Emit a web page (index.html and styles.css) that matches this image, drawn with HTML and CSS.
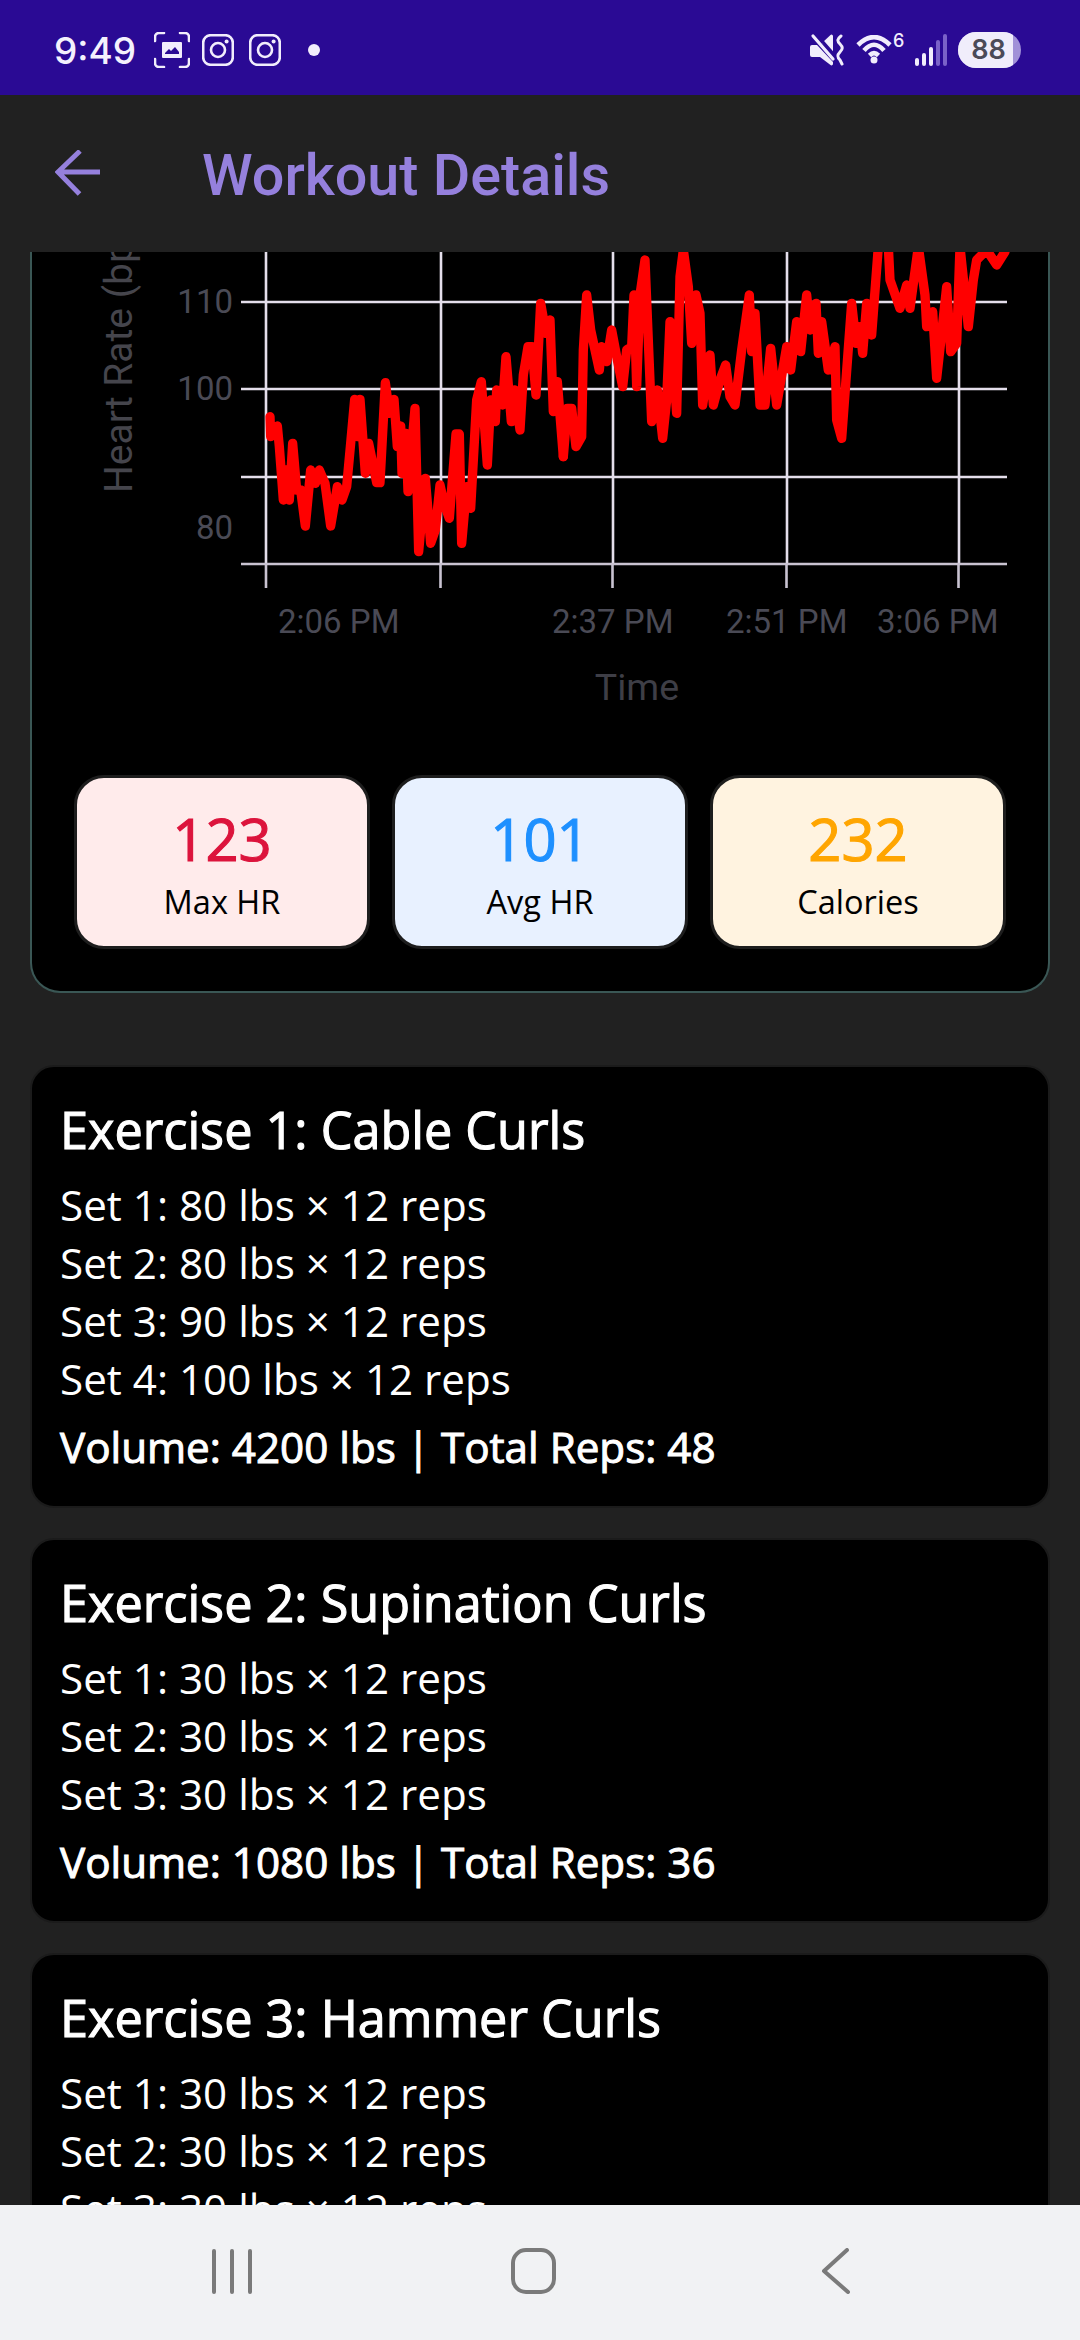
FILE: index.html
```html
<!DOCTYPE html>
<html lang="en">
<head>
<meta charset="utf-8">
<title>Workout Details</title>
<link rel="stylesheet" href="styles.css">
</head>
<body>
<div class="screen">
  <header class="status">
    <div class="status-left">
      <span class="clock">9:49</span>
      <svg class="ic ic-shot" width="36" height="36" viewBox="0 0 36 36"><path class="st" d="M1 9V5a4 4 0 0 1 4-4h5M26 1h5a4 4 0 0 1 4 4v4M35 27v4a4 4 0 0 1-4 4h-5M10 35H5a4 4 0 0 1-4-4v-4"/><path class="fl" d="M9 10h18a1 1 0 0 1 1 1v14a1 1 0 0 1-1 1H9a1 1 0 0 1-1-1V11a1 1 0 0 1 1-1z"/><path class="cut" d="M11 21l4-4 2 2 4-4 4 5v2H11z"/></svg>
      <svg class="ic ic-ig" width="32" height="32" viewBox="0 0 32 32"><rect class="st" x="1.2" y="1.2" width="29.6" height="29.6" rx="7.5"/><circle class="st" cx="16" cy="16" r="7"/><circle class="fl" cx="24.6" cy="7.4" r="2"/></svg>
      <svg class="ic ic-ig2" width="32" height="32" viewBox="0 0 32 32"><rect class="st" x="1.2" y="1.2" width="29.6" height="29.6" rx="7.5"/><circle class="st" cx="16" cy="16" r="7"/><circle class="fl" cx="24.6" cy="7.4" r="2"/></svg>
      <span class="dot"></span>
    </div>
    <div class="status-right">
      <svg class="ic" width="36" height="34" viewBox="0 0 36 34"><path class="fl" d="M4 12h5l16 17v2a1.500 1.500 0 0 1-2.500 1L12 24H4a2 2 0 0 1-2-2v-8a2 2 0 0 1 2-2zM14 10l8.500-8a1.500 1.500 0 0 1 2.500 1v16z"/><path class="st gap" d="M8 1l20 23"/><path class="st slash" d="M5 3l20 23"/><path class="st wave" d="M33 3c-4 3-4 5-1 8s3 5 0 8-3 5 0 8l2 4"/></svg>
      <div class="wifi-wrap">
        <svg class="ic" width="36" height="30" viewBox="0 0 36 30"><path class="st wf" d="M2 10Q18-6 34 10"/><path class="st wf" d="M8 15.500Q18 4 28 15.500"/><path class="st wf" d="M13.500 20.500Q18 16 22.500 20.500"/><circle class="fl" cx="18" cy="25" r="3.500"/></svg>
        <span class="wifi-six">6</span>
      </div>
      <div class="signal">
        <span class="bar b1"></span><span class="bar b2"></span><span class="bar b3"></span><span class="bar b4 dim"></span><span class="bar b5 dim"></span>
      </div>
      <div class="battery"><div class="batt-fill">88</div></div>
    </div>
  </header>

  <div class="appbar">
    <svg class="back" width="46" height="46" viewBox="0 0 46 46"><path d="M45 22H3M25 1L3 22l21.500 22"/></svg>
    <h1 class="title">Workout Details</h1>
  </div>

  <main class="content">
    <section class="chart-card">
      <svg class="chart" width="1016" height="523" viewBox="32 252 1016 523">
        <g class="grid">
          <path d="M241 302H1007M241 389H1007M241 477H1007"/>
          <path d="M266 252V564M441 252V564M613 252V564M787 252V564M959 252V564"/>
        </g>
        <g class="grid grid-low">
          <path d="M241 564H1007"/>
          <path d="M266 564V588M440.500 564V588M612.500 564V588M786.500 564V588M958.500 564V588"/>
        </g>
        <text class="tick end" x="233" y="313">110</text>
        <text class="tick end" x="233" y="400">100</text>
        <text class="tick end" x="233" y="539">80</text>
        <text class="tick" x="278" y="633">2:06 PM</text>
        <text class="tick" x="552" y="633">2:37 PM</text>
        <text class="tick" x="726" y="633">2:51 PM</text>
        <text class="tick" x="877" y="633">3:06 PM</text>
        <text class="axis-title" x="637" y="700">Time</text>
        <text class="axis-title rot" transform="translate(132 493) rotate(-90)">Heart Rate (bpm)</text>
        <g class="hr" transform="translate(80 240) scale(.33333)">
          <polyline points="570,530 572,590 592,558 598,620 610,780 618,690 628,780 638,610 650,750 662,750 676,858 692,690 706,730 718,690 735,730 752,858 772,740 786,780 800,740 812,610 824,478 832,590 840,478 856,700 866,610 890,728 900,728 916,428 928,520 942,478 952,620 962,558 966,700 978,580 984,755 1005,505 1016,935 1036,715 1052,910 1066,870 1080,735 1092,790 1108,835 1128,582 1138,582 1145,910 1160,740 1172,805 1190,480 1204,425 1222,675 1232,480 1246,545 1250,450 1268,495 1278,350 1294,545 1304,450 1320,570 1330,405 1344,320 1356,320 1368,465 1382,190 1398,280 1410,240 1420,515 1432,425 1450,650"/>
        </g>
        <g class="hr" transform="translate(560 240) scale(.33333)">
          <polyline points="10,650 22,505 35,505 48,620 65,590 70,330 80,165 92,270 105,330 118,390 125,320 140,365 155,270 170,350 188,440 200,330 215,320 222,165 230,440 240,165 255,60 275,545 292,450 308,595 320,480 330,245 350,520 360,110 370,30 385,140 395,310 408,165 420,220 428,495 450,345 460,495 480,420 497,375 510,470 525,495 545,330 568,165 575,335 585,220 600,495 615,495 632,325 650,495 680,320 692,390 710,245 722,335 740,165 750,270 768,190 775,340 785,245 805,390 825,320 830,540 845,595 875,190 888,310 900,260 908,340 920,190 935,285 955,20 985,20 990,120 1020,205 1040,135 1050,205 1075,20 1095,165 1100,260 1118,215 1130,415 1145,280 1160,140 1172,335 1190,310 1200,20 1225,260 1240,120 1250,60 1280,30 1310,75 1335,35"/>
        </g>
      </svg>
      <div class="stats">
        <div class="stat stat-red"><div class="stat-num">123</div><div class="stat-label">Max HR</div></div>
        <div class="stat stat-blue"><div class="stat-num">101</div><div class="stat-label">Avg HR</div></div>
        <div class="stat stat-orange"><div class="stat-num">232</div><div class="stat-label">Calories</div></div>
      </div>
    </section>

    <section class="ex">
      <h2 class="ex-title">Exercise 1: Cable Curls</h2>
      <p class="set">Set 1: 80 lbs × 12 reps</p>
      <p class="set">Set 2: 80 lbs × 12 reps</p>
      <p class="set">Set 3: 90 lbs × 12 reps</p>
      <p class="set">Set 4: 100 lbs × 12 reps</p>
      <p class="vol">Volume: 4200 lbs | Total Reps: 48</p>
    </section>
    <section class="ex">
      <h2 class="ex-title">Exercise 2: Supination Curls</h2>
      <p class="set">Set 1: 30 lbs × 12 reps</p>
      <p class="set">Set 2: 30 lbs × 12 reps</p>
      <p class="set">Set 3: 30 lbs × 12 reps</p>
      <p class="vol">Volume: 1080 lbs | Total Reps: 36</p>
    </section>
    <section class="ex">
      <h2 class="ex-title">Exercise 3: Hammer Curls</h2>
      <p class="set">Set 1: 30 lbs × 12 reps</p>
      <p class="set">Set 2: 30 lbs × 12 reps</p>
      <p class="set">Set 3: 30 lbs × 12 reps</p>
    </section>
  </main>

  <nav class="navbar">
    <svg class="nav-ic" width="40" height="46" viewBox="0 0 40 46"><path d="M2 3V44M20 3V44M38 3V44"/></svg>
    <svg class="nav-ic" width="46" height="46" viewBox="0 0 46 46"><rect x="2" y="2" width="41" height="42" rx="13"/></svg>
    <svg class="nav-ic" width="30" height="46" viewBox="0 0 30 46"><path d="M26 2L3 23l24 21"/></svg>
  </nav>
</div>
</body>
</html>
```
FILE: styles.css
```css
* { box-sizing: border-box; margin: 0; padding: 0; }
html, body { width: 1080px; height: 2340px; overflow: hidden; background: #212121; }
.screen { width: 1080px; height: 2340px; display: flex; flex-direction: column; font-family: "Open Sans", sans-serif; }

/* status bar */
.status { height: 95px; flex: none; background: #2a0a94; display: flex; justify-content: space-between; align-items: center; padding: 5px 59px 0 54px; color: #f1edfc; }
.status-left, .status-right { display: flex; align-items: center; }
.clock { font: 500 37px/1 Inter, sans-serif; width: 100px; color: #f4f1fd; }
.ic { display: block; flex: none; }
.st { fill: none; stroke: #f1edfc; stroke-width: 2.6; stroke-linecap: round; stroke-linejoin: round; }
.fl { fill: #f1edfc; }
.cut { fill: #2a0a94; }
.gap { stroke: #2a0a94; stroke-width: 3; stroke-linecap: butt; }
.slash { stroke-width: 3.200; }
.wave { stroke-width: 3; }
.wf { stroke-width: 4.600; stroke-linecap: butt; }
.ic-ig { margin-left: 12px; }
.ic-ig2 { margin-left: 15px; }
.dot { width: 12px; height: 12px; border-radius: 50%; background: #f1edfc; margin-left: 27px; }
.wifi-wrap { display: flex; align-items: flex-start; margin-left: 12px; }
.wifi-six { font: 500 18px/1 Inter, sans-serif; margin: -3px 0 0 1px; width: 11px; }
.signal { display: flex; align-items: flex-end; gap: 3px; height: 32px; margin-left: 11px; }
.bar { width: 4px; background: #f1edfc; border-radius: 2px; }
.b1 { height: 8px; } .b2 { height: 13px; } .b3 { height: 19px; } .b4 { height: 26px; } .b5 { height: 32px; }
.dim { background: #7a62c8; }
.battery { width: 63px; height: 36px; border-radius: 18px; background: #a191d8; overflow: hidden; margin-left: 11px; }
.batt-fill { width: 55px; height: 36px; background: #f0edfb; color: #4b4a58; font: 600 27px/36px Inter, sans-serif; text-align: center; padding-left: 6px; }

/* app bar */
.appbar { height: 157px; flex: none; background: #212121; display: flex; align-items: center; padding-left: 55px; }
.back { flex: none; display: block; margin-top: -1px; }
.back path { fill: none; stroke: #9580dd; stroke-width: 5; }
.title { font: 500 57.500px/1 Roboto, sans-serif; color: #9580dd; margin: 4px 0 0 101px; }

/* content */
.content { flex: 1; min-height: 0; overflow: hidden; padding: 0 30px; display: flex; flex-direction: column; background: #212121; }
.chart-card { flex: none; background: #000; border: 2px solid #3a5755; border-top: 0; border-radius: 0 0 30px 30px; padding-bottom: 42px; }
.chart { display: block; }
.grid path { fill: none; stroke: #e4deeb; stroke-width: 2.600; }
.grid-low path { stroke: #c9c3d1; }
.tick { font: 400 33px Roboto, sans-serif; fill: #4a4a55; }
.end { text-anchor: end; }
.axis-title { font: 400 37.500px Roboto, sans-serif; fill: #3e3e46; text-anchor: middle; }
.rot { font-size: 39px; text-anchor: start; fill: #45454c; }
.hr polyline { fill: none; stroke: #f00; stroke-width: 28; stroke-linejoin: round; stroke-linecap: round; }

.stats { display: flex; gap: 22px; padding: 0 42px; }
.stat { flex: 1; height: 174px; border: 3px solid #1d1d1d; border-radius: 30px; text-align: center; padding-top: 26px; }
.stat-red { background: #ffebeb; }
.stat-blue { background: #e8f1ff; }
.stat-orange { background: #fff3e0; }
.stat-num { font-size: 58px; line-height: 70px; -webkit-text-stroke: 1.100px currentColor; }
.stat-red .stat-num { color: #dc143c; }
.stat-blue .stat-num { color: #1e90ff; }
.stat-orange .stat-num { color: #ffa500; }
.stat-label { font-size: 32.500px; line-height: 55px; color: #000; }

.ex { flex: none; background: #000; border: 2px solid #1b1b1b; border-radius: 24px; padding: 29px 28px 30px; margin-top: 30px; }
.chart-card + .ex { margin-top: 72px; }
.ex-title { font-size: 50.400px; line-height: 68px; font-weight: 400; color: #fff; margin-bottom: 12px; -webkit-text-stroke: 1.100px #fff; }
.set { font-size: 42.200px; line-height: 58px; color: #fff; }
.vol { font-size: 42.200px; line-height: 58px; color: #fff; margin-top: 10px; -webkit-text-stroke: 1px #fff; }

/* nav */
.navbar { height: 135px; flex: none; background: #f1f2f4; display: grid; grid-template-columns: repeat(3, 302px); justify-items: center; align-items: start; padding: 43px 0 0 81px; }
.nav-ic { display: block; }
.nav-ic path, .nav-ic rect { fill: none; stroke: #7a7a7a; stroke-width: 4; stroke-linecap: round; stroke-linejoin: round; }
```
